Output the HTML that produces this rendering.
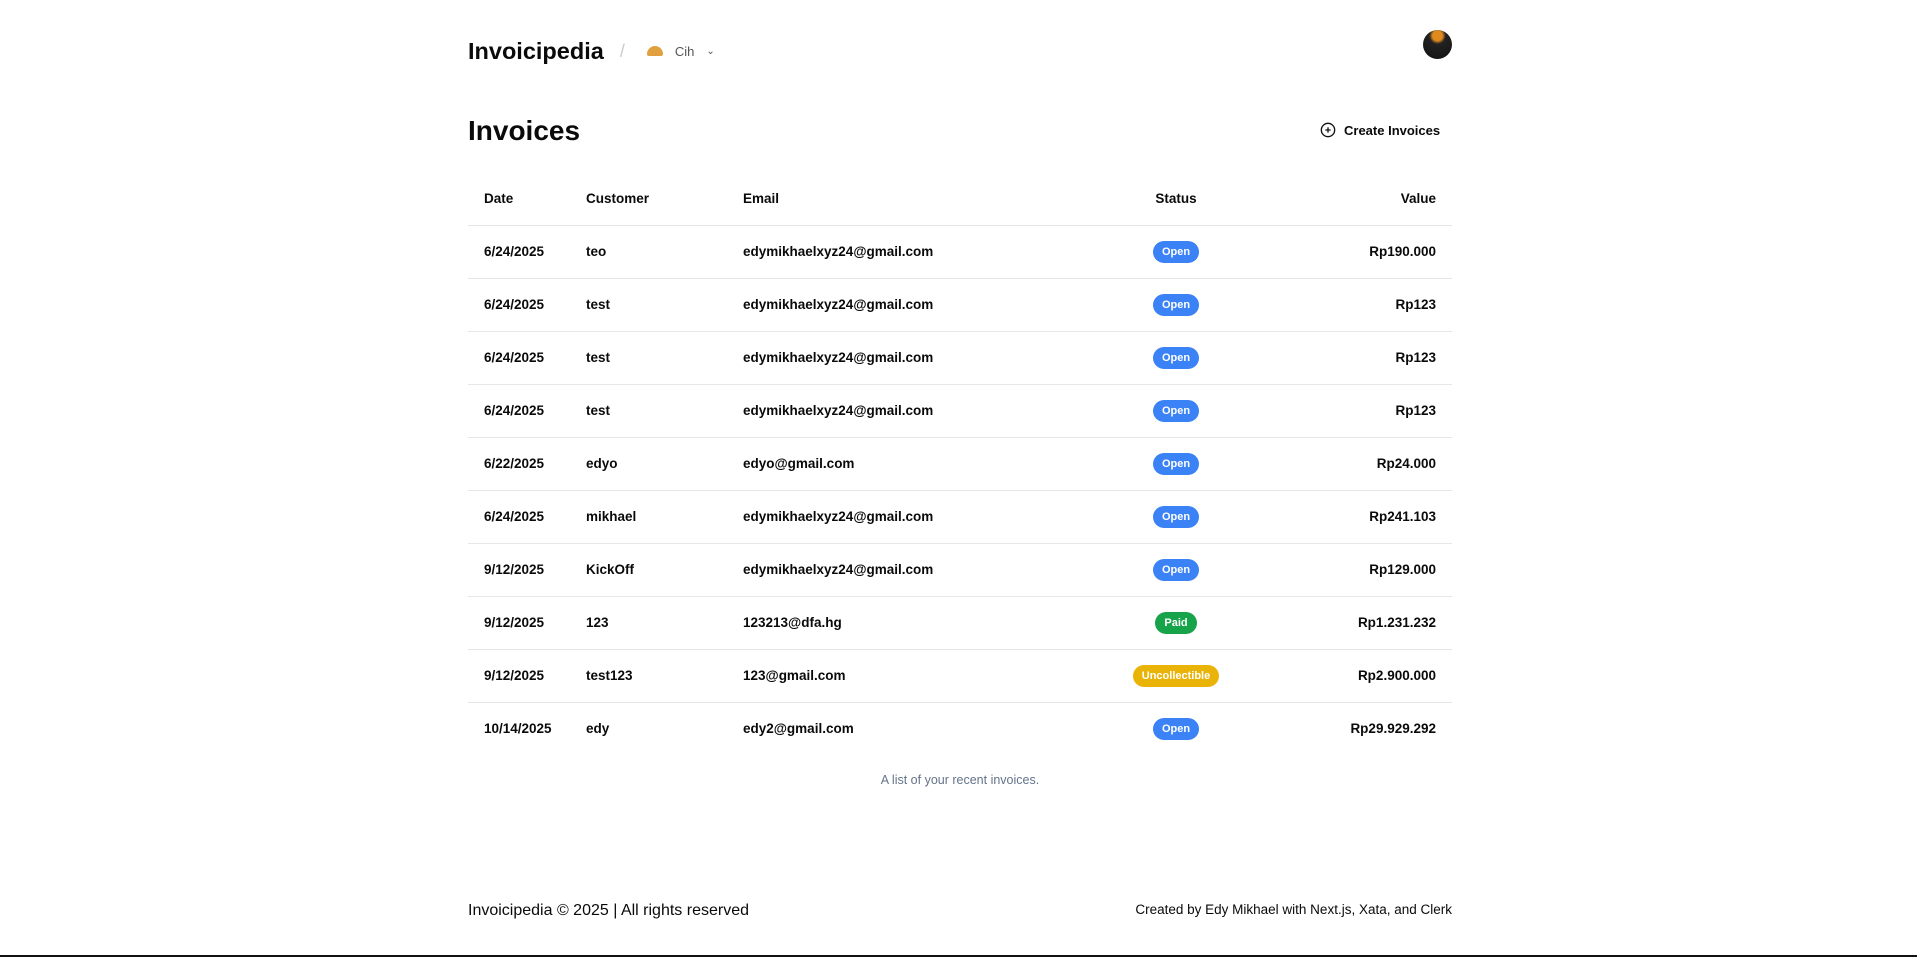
<!DOCTYPE html>
<html><head><meta charset="utf-8"><style>
*{margin:0;padding:0;box-sizing:border-box}
body{width:1917px;height:957px;background:#fff;font-family:"Liberation Sans",sans-serif;color:#0a0a0a;position:relative;overflow:hidden}
.c{position:absolute;left:468px;width:984px}
.logo{top:36px;font-size:23.5px;font-weight:700;height:30px;display:flex;align-items:center}
.logo .sl{color:#ccc;font-weight:400;font-size:18px;margin:0 22px 0 16px}
.logo .org{font-size:13px;font-weight:400;color:#555;display:flex;align-items:center;gap:12px}
.av{position:absolute;left:1423px;top:30px;width:29px;height:29px;border-radius:50%;background:radial-gradient(circle at 50% 20%,#e08a1e 0 18%,#222 30%,#111 100%)}
h1{position:absolute;left:468px;top:115px;font-size:28px;font-weight:600}
.cr{position:absolute;left:1320px;top:122px;font-size:13px;font-weight:700;display:flex;align-items:center;gap:8px}
table{position:absolute;left:468px;top:172px;width:984px;border-collapse:collapse;font-size:13.5px}
th{font-weight:700;text-align:left;height:53px;border-bottom:1px solid #e5e7eb;padding:0 16px}
td{font-weight:700;height:53px;border-bottom:1px solid #e5e7eb;padding:0 16px}
tr:last-child td{border-bottom:none}
.s{text-align:center}.v{text-align:right}
.b{display:inline-block;color:#fff;font-size:11px;font-weight:700;padding:4px 9px;border-radius:12px;line-height:14px}
.o{background:#3b82f6}.p{background:#16a34a}.u{background:#eab308}
.cap{position:absolute;left:468px;width:984px;top:773px;text-align:center;font-size:12.5px;color:#64748b}
.f1{position:absolute;left:468px;top:902px;font-size:16px}
.f2{position:absolute;right:465px;top:902px;font-size:13.5px}
.bl{position:absolute;left:0;bottom:0;width:100%;height:2px;background:#111}
</style></head><body>
<div class="c logo">Invoicipedia<span class="sl">/</span><span class="org"><span style="display:inline-block;width:16px;height:10px;border-radius:8px 8px 2px 2px;background:#e0a040"></span>Cih <span style="font-size:10px">&#8964;</span></span></div>
<div class="av"></div>
<h1>Invoices</h1>
<div class="cr"><svg width="16" height="16" viewBox="0 0 24 24" fill="none" stroke="#111" stroke-width="2"><circle cx="12" cy="12" r="10"/><path d="M12 8v8M8 12h8"/></svg>Create Invoices</div>
<table>
<tr><th style="width:102px">Date</th><th style="width:157px">Customer</th><th>Email</th><th class="s" style="width:180px">Status</th><th class="v" style="width:186px">Value</th></tr>
<tr><td>6/24/2025</td><td>teo</td><td>edymikhaelxyz24@gmail.com</td><td class="s"><span class="b o">Open</span></td><td class="v">Rp190.000</td></tr>
<tr><td>6/24/2025</td><td>test</td><td>edymikhaelxyz24@gmail.com</td><td class="s"><span class="b o">Open</span></td><td class="v">Rp123</td></tr>
<tr><td>6/24/2025</td><td>test</td><td>edymikhaelxyz24@gmail.com</td><td class="s"><span class="b o">Open</span></td><td class="v">Rp123</td></tr>
<tr><td>6/24/2025</td><td>test</td><td>edymikhaelxyz24@gmail.com</td><td class="s"><span class="b o">Open</span></td><td class="v">Rp123</td></tr>
<tr><td>6/22/2025</td><td>edyo</td><td>edyo@gmail.com</td><td class="s"><span class="b o">Open</span></td><td class="v">Rp24.000</td></tr>
<tr><td>6/24/2025</td><td>mikhael</td><td>edymikhaelxyz24@gmail.com</td><td class="s"><span class="b o">Open</span></td><td class="v">Rp241.103</td></tr>
<tr><td>9/12/2025</td><td>KickOff</td><td>edymikhaelxyz24@gmail.com</td><td class="s"><span class="b o">Open</span></td><td class="v">Rp129.000</td></tr>
<tr><td>9/12/2025</td><td>123</td><td>123213@dfa.hg</td><td class="s"><span class="b p">Paid</span></td><td class="v">Rp1.231.232</td></tr>
<tr><td>9/12/2025</td><td>test123</td><td>123@gmail.com</td><td class="s"><span class="b u">Uncollectible</span></td><td class="v">Rp2.900.000</td></tr>
<tr><td>10/14/2025</td><td>edy</td><td>edy2@gmail.com</td><td class="s"><span class="b o">Open</span></td><td class="v">Rp29.929.292</td></tr>
</table>
<div class="cap">A list of your recent invoices.</div>
<div class="f1">Invoicipedia © 2025 | All rights reserved</div>
<div class="f2">Created by Edy Mikhael with Next.js, Xata, and Clerk</div>
<div class="bl"></div>
</body></html>
